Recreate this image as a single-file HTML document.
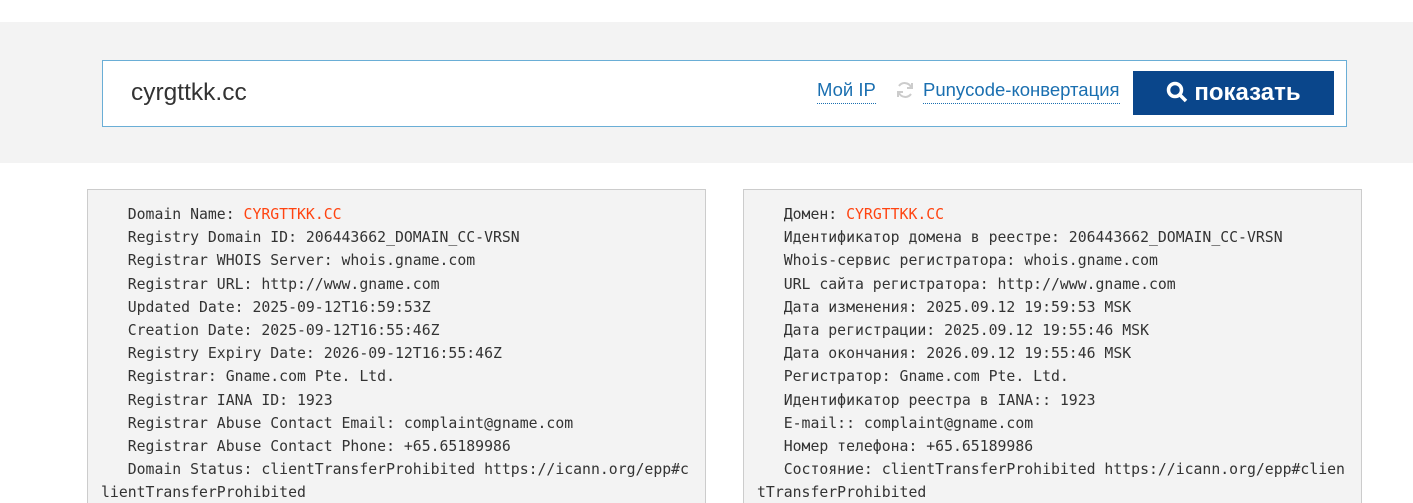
<!DOCTYPE html>
<html style="height:503px;overflow:hidden"><head><meta charset="utf-8"><style>
body{margin:0;width:1413px;height:503px;overflow:hidden;background:#fff;font-family:"Liberation Sans",sans-serif;position:relative}
.band{position:absolute;left:0;top:22px;width:1413px;height:141px;background:#f3f3f3}
.search{position:absolute;left:102px;top:60px;width:1243px;height:65px;background:#fff;border:1px solid #6aaed6}
.q{position:absolute;left:28px;top:18px;font-size:24.5px;color:#333}
.lnk{position:absolute;top:18px;font-size:18.5px;color:#1a6fb0;border-bottom:1px dotted #1a6fb0;padding-bottom:2px}
.btn{position:absolute;left:1030px;top:10px;width:201px;height:44px;background:#0a468b;color:#fff;font-weight:bold;font-size:24px;line-height:44px;text-align:center}
.box{position:absolute;top:189px;width:604px;height:318px;background:#f3f3f3;border:1px solid #ccc;border-bottom:none;padding:0 0 0 13px}
pre{margin:13px 0 0;font-family:"DejaVu Sans Mono",monospace;font-size:14.8px;line-height:23.2px;color:#333}
.r{color:#ff4411}
</style></head><body>
<div class="band"></div>
<div class="search">
<div class="q">cyrgttkk.cc</div>
<div class="lnk" style="left:714px">Мой IP</div>
<svg style="position:absolute;left:792px;top:19px" width="20" height="20" viewBox="0 0 20 20" fill="none" stroke="#ccc" stroke-width="2"><path d="M16 7A7 7 0 0 0 4 6M4 13a7 7 0 0 0 12 1"/><path d="M17 3v5h-5M3 17v-5h5"/></svg>
<div class="lnk" style="left:820px">Punycode-конвертация</div>
<div class="btn"><svg width="22" height="22" viewBox="0 0 22 22" style="vertical-align:-3px;margin-right:6px" fill="none" stroke="#fff" stroke-width="3.5"><circle cx="9" cy="9" r="6.5"/><path d="M14 14l6 6"/></svg>показать</div>
</div>
<div class="box" style="left:87px"><pre>   Domain Name: <span class="r">CYRGTTKK.CC</span>
   Registry Domain ID: 206443662_DOMAIN_CC-VRSN
   Registrar WHOIS Server: whois.gname.com
   Registrar URL: http://www.gname.com
   Updated Date: 2025-09-12T16:59:53Z
   Creation Date: 2025-09-12T16:55:46Z
   Registry Expiry Date: 2026-09-12T16:55:46Z
   Registrar: Gname.com Pte. Ltd.
   Registrar IANA ID: 1923
   Registrar Abuse Contact Email: complaint@gname.com
   Registrar Abuse Contact Phone: +65.65189986
   Domain Status: clientTransferProhibited https://icann.org/epp#c
lientTransferProhibited</pre></div>
<div class="box" style="left:743px"><pre>   Домен: <span class="r">CYRGTTKK.CC</span>
   Идентификатор домена в реестре: 206443662_DOMAIN_CC-VRSN
   Whois-сервис регистратора: whois.gname.com
   URL сайта регистратора: http://www.gname.com
   Дата изменения: 2025.09.12 19:59:53 MSK
   Дата регистрации: 2025.09.12 19:55:46 MSK
   Дата окончания: 2026.09.12 19:55:46 MSK
   Регистратор: Gname.com Pte. Ltd.
   Идентификатор реестра в IANA:: 1923
   E-mail:: complaint@gname.com
   Номер телефона: +65.65189986
   Состояние: clientTransferProhibited https://icann.org/epp#clien
tTransferProhibited</pre></div>
</body></html>
